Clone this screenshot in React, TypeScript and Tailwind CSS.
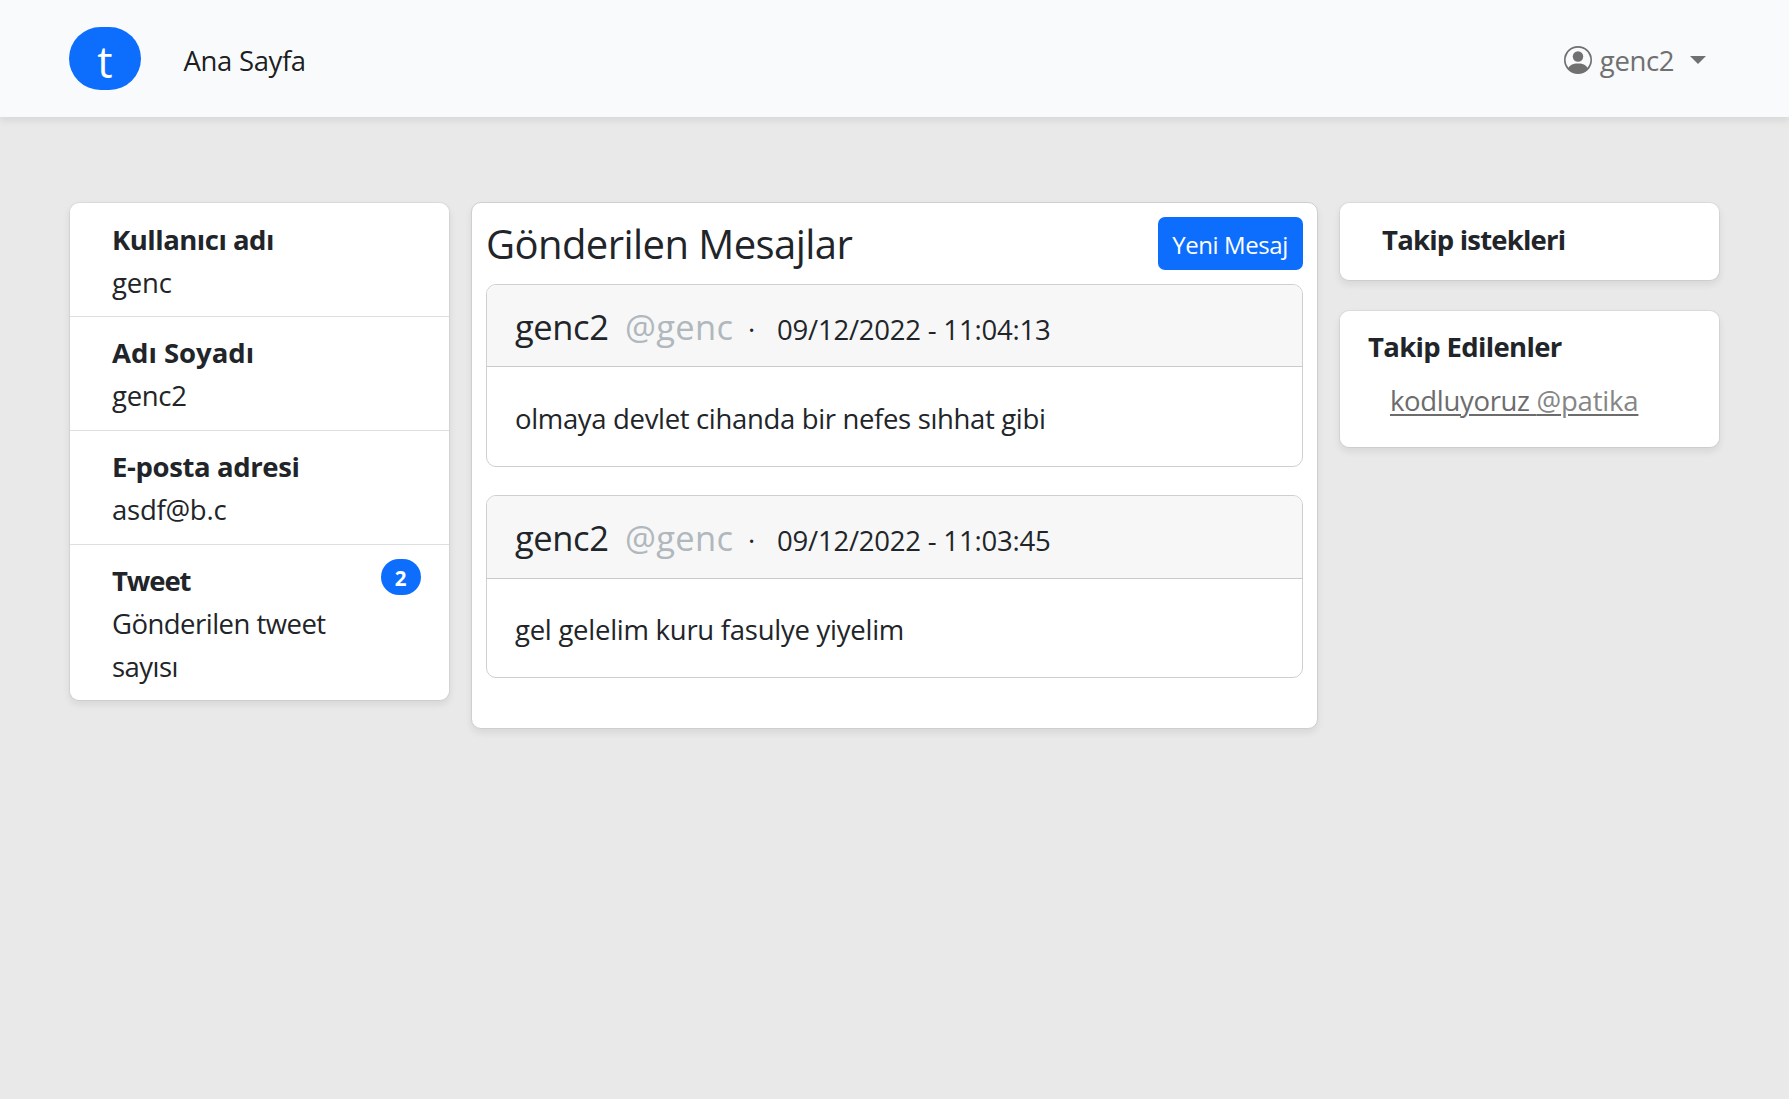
import { BsPersonCircle } from "react-icons/bs";

function Navbar() {
  return (
    <nav className="relative flex h-[117px] items-center bg-[#f8fafc] px-[69px] shadow-[0_4px_7px_rgba(0,0,0,0.075)]">
      <a className="flex h-[63px] w-[72px] items-center justify-center rounded-full bg-[#0d6efd] pt-[6px] text-[43px] leading-[58px] font-medium text-white">
        t
      </a>
      <a className="ml-[42.5px] pt-[3px] tracking-[-0.42px] text-black/90 [word-spacing:0.5px]">Ana Sayfa</a>
      <div className="mr-[14px] ml-auto flex items-center pt-[3px] text-[#707070]">
        <BsPersonCircle className="size-[28px]" />
        <span className="ml-[8px] tracking-[-0.4px]">genc2</span>
        <span className="mb-px ml-[16px] border-x-8 border-t-8 border-x-transparent border-t-[#707070]" />
      </div>
    </nav>
  );
}

function ProfileCard() {
  return (
    <ul className="divide-y divide-[#dedfe0] rounded-[10px] border border-black/5 bg-white bg-clip-padding shadow-[0_4px_7px_rgba(0,0,0,0.075)]">
      <li className="h-[114px] pt-[15px] pl-[42px]">
        <div className="font-bold tracking-[-0.49px]">Kullanıcı adı</div>
        <div className="tracking-[-0.2px]">genc</div>
      </li>
      <li className="h-[114px] pt-[14px] pl-[42px]">
        <div className="font-bold">Adı Soyadı</div>
        <div className="tracking-[-0.3px]">genc2</div>
      </li>
      <li className="h-[114px] pt-[14px] pl-[42px]">
        <div className="font-bold tracking-[-0.38px]">E-posta adresi</div>
        <div className="tracking-[-0.25px]">asdf@b.c</div>
      </li>
      <li className="flex h-[155px] items-start justify-between pt-[14px] pr-[28px] pl-[42px]">
        <div>
          <div className="font-bold tracking-[-1.1px]">Tweet</div>
          <div className="w-[240px] tracking-[-0.53px]">Gönderilen tweet sayısı</div>
        </div>
        <span className="flex h-[36px] w-[40px] items-center justify-center rounded-full bg-[#0d6efd] pt-[2px] pr-px text-[20.5px] leading-none font-bold text-white">
          2
        </span>
      </li>
    </ul>
  );
}

type Message = { date: string; text: string };

const messages: Message[] = [
  { date: "09/12/2022 - 11:04:13", text: "olmaya devlet cihanda bir nefes sıhhat gibi" },
  { date: "09/12/2022 - 11:03:45", text: "gel gelelim kuru fasulye yiyelim" },
];

function MessageCard({ message }: { message: Message }) {
  return (
    <article className="group h-[183px] overflow-hidden rounded-[10px] border border-[#cfcfcf] bg-white">
      <header className="flex h-[82px] items-baseline border-b border-[#cacaca] bg-[#f7f7f7] pt-[20px] pl-[28px] group-last:h-[83px]">
        <span className="w-[110px] text-[34.5px] tracking-[-0.4px]">genc2</span>
        <span className="w-[123px] text-[34.5px] tracking-[0.33px] text-[#b0b7bd]">@genc</span>
        <span className="w-[29px]">·</span>
        <span className="tracking-[-0.21px]">{message.date}</span>
      </header>
      <p className="pt-[30px] pl-[28px] tracking-[-0.34px] group-last:pt-[29px] group-last:tracking-[-0.26px]">
        {message.text}
      </p>
    </article>
  );
}

function MessagesPanel() {
  return (
    <main className="h-[527px] rounded-[10px] border border-[#cfcfcf] bg-white p-[14px] shadow-[0_4px_7px_rgba(0,0,0,0.075)]">
      <div className="mb-[14px] flex h-[53px] items-center justify-between">
        <h1 className="text-[40px] leading-[53px] tracking-[-0.57px]">Gönderilen Mesajlar</h1>
        <button className="h-[53px] w-[145px] rounded-[7px] bg-[#0d6efd] pt-[2px] pr-px text-[24px] tracking-[-0.42px] text-white">
          Yeni Mesaj
        </button>
      </div>
      <div className="flex flex-col gap-[28px]">
        {messages.map((m) => (
          <MessageCard key={m.date} message={m} />
        ))}
      </div>
    </main>
  );
}

function FollowColumn() {
  return (
    <aside className="flex flex-col gap-[29px]">
      <section className="h-[79px] rounded-[10px] border border-black/5 bg-white bg-clip-padding pt-[15px] pl-[42px] shadow-[0_4px_7px_rgba(0,0,0,0.075)]">
        <h2 className="font-bold tracking-[-0.8px]">Takip istekleri</h2>
      </section>
      <section className="h-[138px] rounded-[10px] border border-black/5 bg-white bg-clip-padding pt-[14px] pl-[28px] shadow-[0_4px_7px_rgba(0,0,0,0.075)]">
        <h2 className="mb-[11px] font-bold tracking-[-0.66px]">Takip Edilenler</h2>
        <a className="ml-[22px] text-[#6c6c6c] underline decoration-2 underline-offset-[3px]">
          <span className="tracking-[-0.33px]">kodluyoruz </span>
          <span className="tracking-[-0.18px] text-[#868686]">@patika</span>
        </a>
      </section>
    </aside>
  );
}

export default function App() {
  return (
    <div className="min-h-screen bg-[#e9e9e9] font-['Open_Sans','Noto_Sans',sans-serif] text-[27.5px] leading-[43px] text-[#212529]">
      <Navbar />
      <div className="grid grid-cols-[381px_847px_381px] items-start gap-[21px] px-[69px] pt-[85px]">
        <ProfileCard />
        <MessagesPanel />
        <FollowColumn />
      </div>
    </div>
  );
}
